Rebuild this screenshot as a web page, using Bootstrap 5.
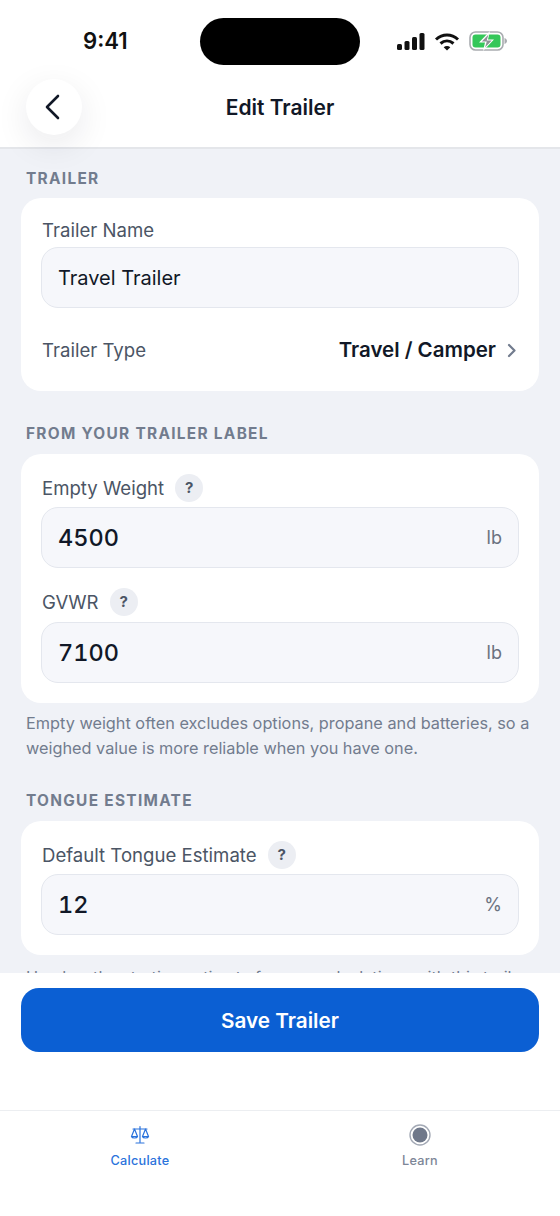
<!DOCTYPE html>
<html lang="en">
<head>
<meta charset="utf-8">
<title>Edit Trailer</title>
<link href="https://cdn.jsdelivr.net/npm/bootstrap@5.3.0/dist/css/bootstrap.min.css" rel="stylesheet">
<style>
html,body{margin:0;height:1216px;overflow:hidden;background:#fff}
body{font-family:Inter,"Liberation Sans",sans-serif;color:#111827}
.app-shell{height:1216px;width:560px}
.top-area{height:149px;flex:none;border-bottom:2px solid #e4e6ea;background:#fff;position:relative;z-index:2}
.status-row{height:70px;padding:18px 52px 0 83px}
.clock{font-size:22.2px;font-weight:600;line-height:46px;width:117px;color:#111}
.island{width:160px;height:47px;border-radius:24px;background:#000;flex:none}
.status-icons{margin-left:36px;gap:9px;height:46px}
.title-row{height:78px;position:relative}
.back-btn{position:absolute;left:26px;top:9px;width:56px;height:56px;border-radius:50%;background:#fff;border:0;padding:0;box-shadow:0 10px 34px rgba(17,24,39,.09)}
.page-title{font-size:21px;font-weight:600;margin:0;line-height:76px;text-align:center}
.scroll-area{height:824px;flex:none;background:#f0f2f7;overflow:hidden;padding:0 21px}
.sec-head{font-size:15.4px;font-weight:700;letter-spacing:1.3px;color:#727c8e;line-height:20px;margin:0 0 10px 5px}
.form-panel{background:#fff;border-radius:20px;padding:20px}
.field-label{font-size:18.6px;line-height:24px;color:#4b5565;margin:0 0 0 1px}
.field-box{height:61px;background:#f6f7fb;border:1px solid #e4e7ee;border-radius:17px;padding:0 16px}
.field-text{font-size:20px;line-height:28px;color:#111827}
.field-num{font-size:23.5px;font-weight:500;line-height:28px;color:#111827;font-variant-numeric:tabular-nums}
.unit{font-size:18px;color:#6b7280}
.help-dot{width:28px;height:28px;border-radius:50%;background:#eceef3;color:#4b5565;font-size:15px;font-weight:700;margin-left:11px}
.type-row{margin-top:21px;height:42px}
.type-value{font-size:20.5px;font-weight:600;color:#111827;margin-right:1px}
.help-text{font-size:16.3px;line-height:25px;color:#727c8e;margin:8px 5px 0 5px}
.help-text.peek{margin-top:10px}
.action-area{height:137px;flex:none;background:#fff;padding:15px 21px 0}
.save-btn{height:64px;border-radius:18px;background:#0b5fd3;border:0;color:#fff;font-size:20.7px;font-weight:600;width:100%;padding-top:8px}
.save-btn:hover{background:#0b5fd3;color:#fff}
.tab-strip{flex:1 1 auto;background:#fff;border-top:1px solid #eceef1;padding-top:12px}
.tab-item{width:50%;height:50px}
.tab-glyph{height:24px;margin-top:0}
.tab-name{font-size:12.7px;font-weight:500;line-height:18px;margin-top:5px;letter-spacing:.25px}
.tab-on{color:#2b73dc}
.tab-off{color:#7d8697}
.gap-a{margin-top:5px}.gap-c{margin-top:6px}.gap-b{margin-top:20px}
.s1{margin-top:20px;margin-bottom:9px}
.s2{margin-top:33px}.s3{margin-top:30px}
</style>
</head>
<body>
<div class="app-shell d-flex flex-column">
  <header class="top-area">
    <div class="status-row d-flex align-items-start">
      <div class="clock">9:41</div>
      <div class="island"></div>
      <div class="status-icons d-flex align-items-center">
        <svg width="29" height="19" viewBox="0 0 29 19"><rect x="1" y="12" width="5" height="6" rx="1.5" fill="#111"/><rect x="8.5" y="9" width="5" height="9" rx="1.5" fill="#111"/><rect x="16" y="5" width="5" height="13" rx="1.5" fill="#111"/><rect x="23.500" y="1" width="5" height="17" rx="1.5" fill="#111"/></svg>
        <svg width="26" height="19" viewBox="0 0 26 19" fill="none" stroke="#111" stroke-width="3"><path d="M2 7.500C8.500 1.500 17.500 1.500 24 7.500"/><path d="M6.500 11.500C10.500 8 15.500 8 19.500 11.500"/><path d="M13 18.500 9.700 15.200C11.500 13.500 14.500 13.500 16.300 15.200Z" fill="#111" stroke="none"/></svg>
        <svg width="39" height="20" viewBox="0 0 39 20"><rect x="1" y="1" width="33" height="18" rx="5.500" fill="none" stroke="#a9acb0" stroke-width="1.600"/><rect x="3.500" y="3.500" width="28" height="13" rx="3" fill="#34c759"/><path d="M35.500 7v6c1.500-.5 2.500-1.600 2.500-3s-1-2.500-2.500-3z" fill="#a9acb0"/><path d="M21 0 10 11.500h6L14 20l11-11.500h-6z" fill="#fff"/><path d="M19.500 3.500 12.800 10.500h5L16 16.500l6.700-7h-5z" fill="#8e9296"/></svg>
      </div>
    </div>
    <div class="title-row">
      <button class="back-btn d-flex align-items-center justify-content-center" type="button" aria-label="Back">
        <svg width="18" height="28" viewBox="0 0 18 28" fill="none" stroke="#111827" stroke-width="2.600" stroke-linecap="round" stroke-linejoin="round"><path d="M13 3 2 14l11 11"/></svg>
      </button>
      <h1 class="page-title">Edit Trailer</h1>
    </div>
  </header>

  <main class="scroll-area">
    <div class="sec-head s1">TRAILER</div>
    <section class="form-panel">
      <p class="field-label">Trailer Name</p>
      <div class="field-box gap-a d-flex align-items-center"><span class="field-text">Travel Trailer</span></div>
      <div class="type-row d-flex align-items-center justify-content-between">
        <span class="field-label">Trailer Type</span>
        <span class="d-flex align-items-center">
          <span class="type-value">Travel / Camper</span>
          <svg class="ms-2" width="14" height="16" viewBox="0 0 14 16" fill="none" stroke="#727c8e" stroke-width="2.200" stroke-linecap="round" stroke-linejoin="round"><path d="M4 3 9.500 8.500 4 14"/></svg>
        </span>
      </div>
    </section>

    <div class="sec-head s2">FROM YOUR TRAILER LABEL</div>
    <section class="form-panel">
      <div class="d-flex align-items-center"><span class="field-label">Empty Weight</span><span class="help-dot d-flex align-items-center justify-content-center">?</span></div>
      <div class="field-box gap-a d-flex align-items-center justify-content-between"><span class="field-num">4500</span><span class="unit">lb</span></div>
      <div class="d-flex align-items-center gap-b"><span class="field-label">GVWR</span><span class="help-dot d-flex align-items-center justify-content-center">?</span></div>
      <div class="field-box gap-c d-flex align-items-center justify-content-between"><span class="field-num">7100</span><span class="unit">lb</span></div>
    </section>
    <p class="help-text">Empty weight often excludes options, propane and batteries, so a weighed value is more reliable when you have one.</p>

    <div class="sec-head s3">TONGUE ESTIMATE</div>
    <section class="form-panel">
      <div class="d-flex align-items-center"><span class="field-label">Default Tongue Estimate</span><span class="help-dot d-flex align-items-center justify-content-center">?</span></div>
      <div class="field-box gap-a d-flex align-items-center justify-content-between"><span class="field-num">12</span><span class="unit">%</span></div>
    </section>
    <p class="help-text peek">Used as the starting estimate for new calculations with this trailer.</p>
  </main>

  <div class="action-area"><button class="btn save-btn" type="button">Save Trailer</button></div>

  <nav class="tab-strip d-flex">
    <div class="tab-item d-flex flex-column align-items-center tab-on">
      <div class="tab-glyph d-flex align-items-center">
      <svg width="20" height="20" viewBox="0 0 20 20" fill="none" stroke="#2b73dc" stroke-width="1.200" stroke-linejoin="round" stroke-linecap="round"><path d="M10 1.500V17M6 18h8M3 4h14"/><path d="M4.500 4 1.500 11.500c.5 2 5.500 2 6 0zM15.500 4l-3 7.500c.5 2 5.500 2 6 0z"/><path d="M1.500 11.500h6M12.500 11.500h6"/></svg>
      </div>
      <span class="tab-name">Calculate</span>
    </div>
    <div class="tab-item d-flex flex-column align-items-center tab-off">
      <div class="tab-glyph d-flex align-items-center">
      <svg width="22" height="22" viewBox="0 0 22 22"><circle cx="11" cy="11" r="10" fill="none" stroke="#a3a9b5" stroke-width="1.400"/><circle cx="11" cy="11" r="7.500" fill="#6f788a"/></svg>
      </div>
      <span class="tab-name">Learn</span>
    </div>
  </nav>
</div>
<script src="https://cdn.jsdelivr.net/npm/bootstrap@5.3.0/dist/js/bootstrap.bundle.min.js"></script>
</body>
</html>
